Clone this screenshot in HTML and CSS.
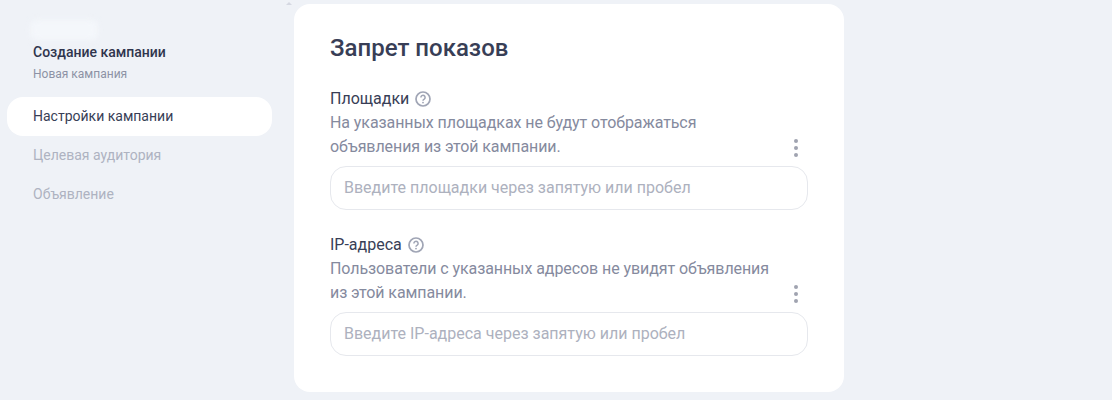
FILE: index.html
```html
<!DOCTYPE html>
<html lang="ru">

<head>
    <meta charset="utf-8">
    <meta name="viewport" content="width=device-width, initial-scale=1.0">
    <title>Создание кампании</title>

    <link rel="stylesheet" href="styles.css">
</head>

<body>
    <aside class="sidebar">
        <div class="logo"></div>
        <h2 class="sidebar-title">Создание кампании</h2>
        <p class="sidebar-sub">Новая кампания</p>
        <nav class="menu">
            <a class="menu-item active">Настройки кампании</a>
            <a class="menu-item">Целевая аудитория</a>
            <a class="menu-item">Объявление</a>
        </nav>
    </aside>

    <div class="scroll-caret"></div>

    <main class="card">
        <h1>Запрет показов</h1>

        <section class="field">
            <div class="label">
                Площадки
                <svg class="help" viewBox="0 0 16 16" width="16" height="16">
                    <circle cx="8" cy="8" r="7" fill="none" stroke="#a0a5b5" stroke-width="1.7" />
                    <path d="M5.9 6.4a2.1 2.1 0 1 1 3.3 1.7c-.8.5-1.2.9-1.2 1.7" fill="none" stroke="#a0a5b5" stroke-width="1.5" />
                    <circle cx="8" cy="11.6" r="0.9" fill="#a0a5b5" />
                </svg>
            </div>
            <div class="desc-row">
                <p class="desc">На указанных площадках не будут отображаться объявления из этой кампании.</p>
                <span class="kebab"><i></i><i></i><i></i></span>
            </div>
            <div class="input">Введите площадки через запятую или пробел</div>
        </section>

        <section class="field">
            <div class="label">
                IP-адреса
                <svg class="help" viewBox="0 0 16 16" width="16" height="16">
                    <circle cx="8" cy="8" r="7" fill="none" stroke="#a0a5b5" stroke-width="1.7" />
                    <path d="M5.9 6.4a2.1 2.1 0 1 1 3.3 1.7c-.8.5-1.2.9-1.2 1.7" fill="none" stroke="#a0a5b5" stroke-width="1.5" />
                    <circle cx="8" cy="11.6" r="0.9" fill="#a0a5b5" />
                </svg>
            </div>
            <div class="desc-row">
                <p class="desc">Пользователи с указанных адресов не увидят объявления из этой кампании.</p>
                <span class="kebab"><i></i><i></i><i></i></span>
            </div>
            <div class="input">Введите IP-адреса через запятую или пробел</div>
        </section>
    </main>
</body>

</html>
```

FILE: styles.css
```css
* {
    box-sizing: border-box;
}

html,
body {
    height: 400px;
    overflow: hidden;
}

body {
    margin: 0;
    display: flex;
    align-items: flex-start;
    background-color: #eff2f7;
    font-family: Roboto, sans-serif;
    color: #383e56;
}

.sidebar {
    width: 294px;
    flex-shrink: 0;
    padding: 20px 22px 0 7px;
}

.logo {
    width: 68px;
    height: 20px;
    margin-left: 23px;
    background-color: #f4f7fb;
    border-radius: 6px;
    filter: blur(3px);
}

.sidebar-title {
    margin: 2px 0 0 26px;
    font-size: 14px;
    font-weight: 500;
    line-height: 20px;
    color: #2f354d;
}

.sidebar-sub {
    margin: 3px 0 0 26px;
    font-size: 12px;
    line-height: 18px;
    color: #8d92a5;
}

.menu {
    margin-top: 14px;
}

.menu-item {
    display: block;
    height: 39px;
    padding-left: 26px;
    font-size: 14px;
    line-height: 39px;
    color: #aeb3c1;
}

.active {
    background-color: white;
    border-radius: 16px;
    color: #383e56;
}

.scroll-caret {
    position: absolute;
    top: 2px;
    left: 286px;
    border-left: 3px solid transparent;
    border-right: 3px solid transparent;
    border-bottom: 3px solid #d5d8e2;
}

.card {
    width: 550px;
    height: 388px;
    margin-top: 4px;
    padding: 28px 36px 0;
    background-color: white;
    border-radius: 16px;
}

h1 {
    margin: 0;
    font-size: 24px;
    font-weight: 500;
    line-height: 32px;
}

.field {
    margin-top: 23px;
}

.label {
    display: flex;
    align-items: center;
    gap: 6px;
    font-size: 16px;
    line-height: 24px;
}

.desc-row {
    position: relative;
    display: flex;
    height: 48px;
}

.desc {
    width: 445px;
    margin: 0;
    font-size: 16px;
    letter-spacing: -0.08px;
    line-height: 24px;
    color: #858a9e;
}

.kebab {
    position: absolute;
    top: 28px;
    left: 464px;
    display: flex;
    flex-direction: column;
    gap: 3px;
}

.kebab i {
    width: 4px;
    height: 4px;
    border-radius: 50%;
    background-color: #a0a3b0;
}

.input {
    width: 478px;
    height: 44px;
    margin-top: 7px;
    padding-left: 13px;
    border: 1px solid #e6e8ed;
    border-radius: 16px;
    font-size: 16px;
    line-height: 42px;
    color: #adb1be;
}
```
